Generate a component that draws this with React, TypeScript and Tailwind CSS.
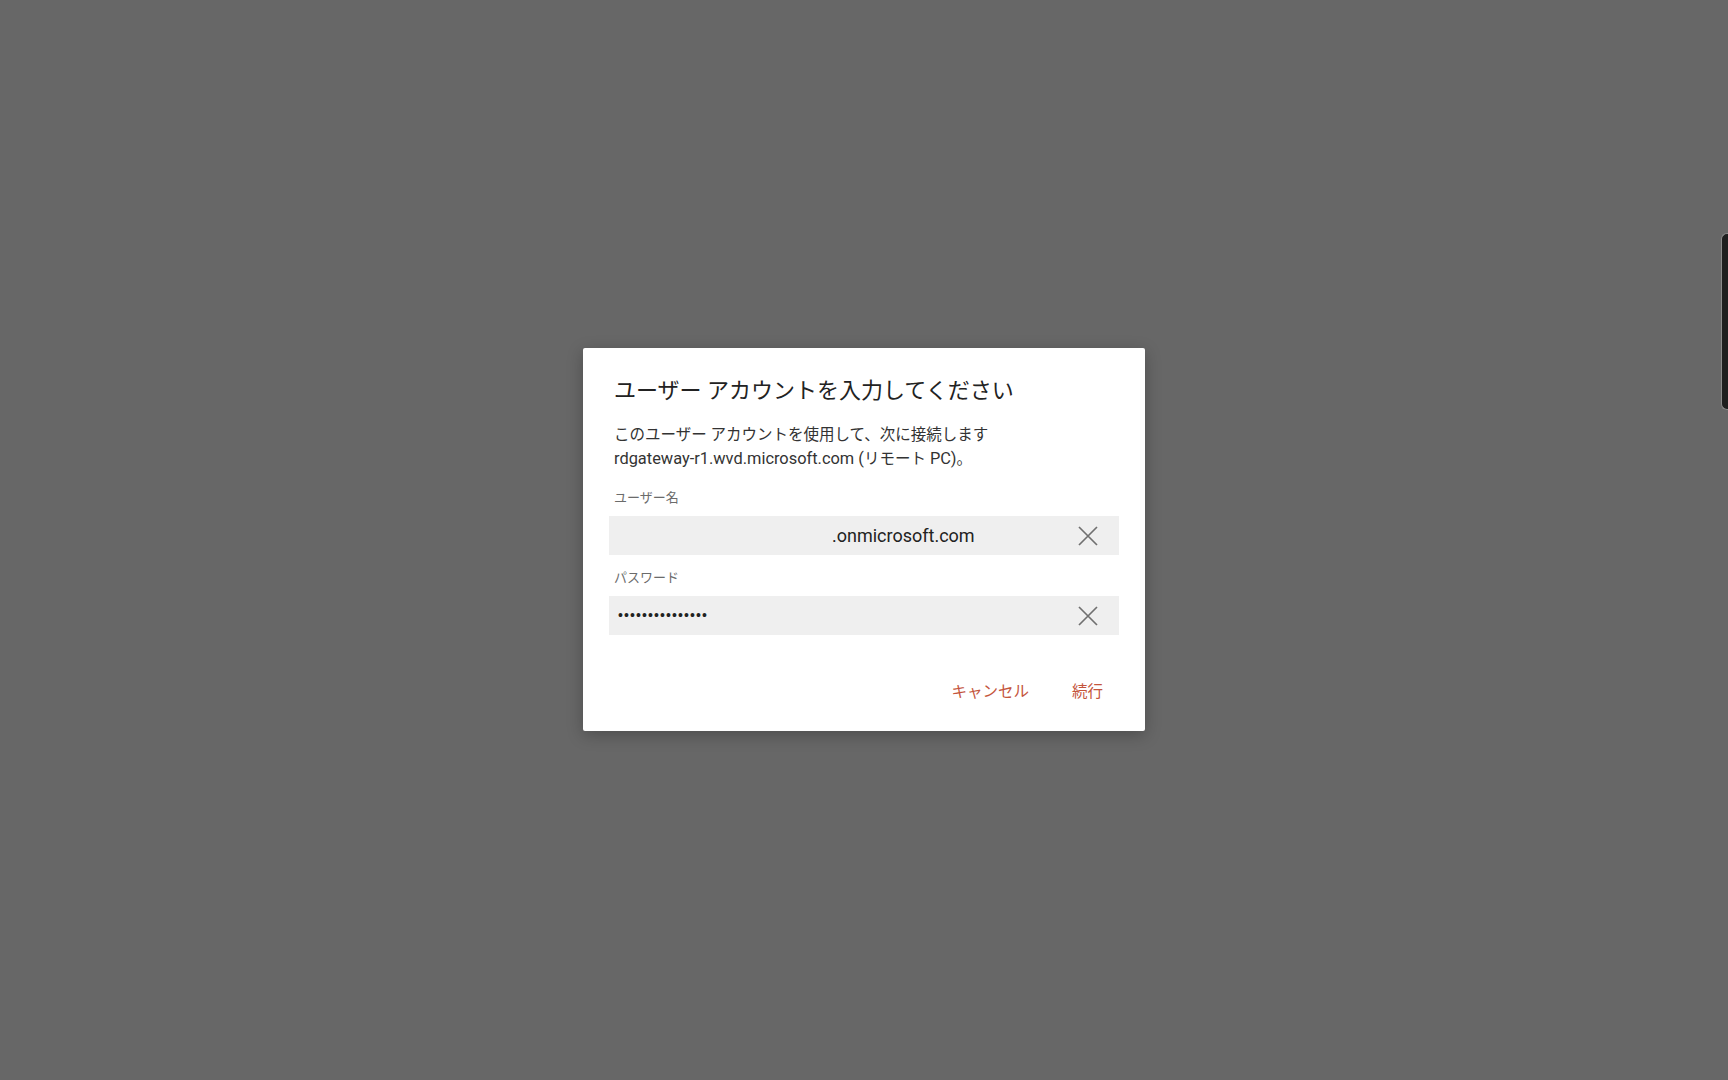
import React from 'react';

function ClearIcon() {
    return (
        <svg width="20" height="20" viewBox="0 0 20 20" className="shrink-0">
            <path d="M1 1 L19 19 M19 1 L1 19" stroke="#707070" strokeWidth="1.7" fill="none" />
        </svg>
    );
}

function Field({ label, children }: { label: string; children: React.ReactNode }) {
    return (
        <div className="flex flex-col">
            <label className="pl-[5px] text-[13px] leading-[18px] text-[#6b6b6b]">{label}</label>
            <div className="mt-[9px] flex h-[39px] items-center justify-between bg-[#efefef] pr-[21px]">
                {children}
                <ClearIcon />
            </div>
        </div>
    );
}

export default function App() {
    return (
        <div
            className="relative flex h-[1080px] w-full items-start justify-center overflow-hidden bg-[#676767]"
            style={{ fontFamily: 'Roboto, "Noto Sans CJK JP", sans-serif' }}
        >
            <div className="mt-[348px] flex w-[562px] flex-col rounded-[2px] bg-white px-[26px] pt-[28px] pb-[20px] shadow-[0_4px_16px_rgba(0,0,0,0.25)]">
                <h1 className="pl-[5px] text-[22px] leading-[30px] font-normal text-[#222]">
                    ユーザー アカウントを入力してください
                </h1>
                <p className="mt-[17px] pl-[5px] text-[15.5px] leading-[24px] text-[#333]">
                    このユーザー アカウントを使用して、次に接続します
                    <br />
                    <span className="text-[16.4px]">rdgateway-r1.wvd.microsoft.com (</span>
                    リモート
                    <span className="text-[16.4px]"> PC)</span>。
                </p>
                <div className="mt-[18px]">
                    <Field label="ユーザー名">
                        <span className="pl-[223px] text-[18px] text-[#222]">.onmicrosoft.com</span>
                    </Field>
                </div>
                <div className="mt-[14px]">
                    <Field label="パスワード">
                        <span
                            className="pl-[9px] text-[14px] tracking-[1.1px] text-[#222]"
                            style={{ fontFamily: '"Liberation Sans", sans-serif' }}
                        >
                            •••••••••••••••
                        </span>
                    </Field>
                </div>
                <div className="mt-[40px] flex justify-end gap-[11px]">
                    <button className="h-[36px] px-[16px] text-[15.5px] text-[#c4553c]">キャンセル</button>
                    <button className="h-[36px] px-[16px] text-[15.5px] text-[#c4553c]">続行</button>
                </div>
            </div>
            <div className="absolute top-[233px] right-0 h-[177px] w-[7px] rounded-l-[6px] border border-r-0 border-[#8a8a8a] bg-[#1f1f1f]" />
        </div>
    );
}
